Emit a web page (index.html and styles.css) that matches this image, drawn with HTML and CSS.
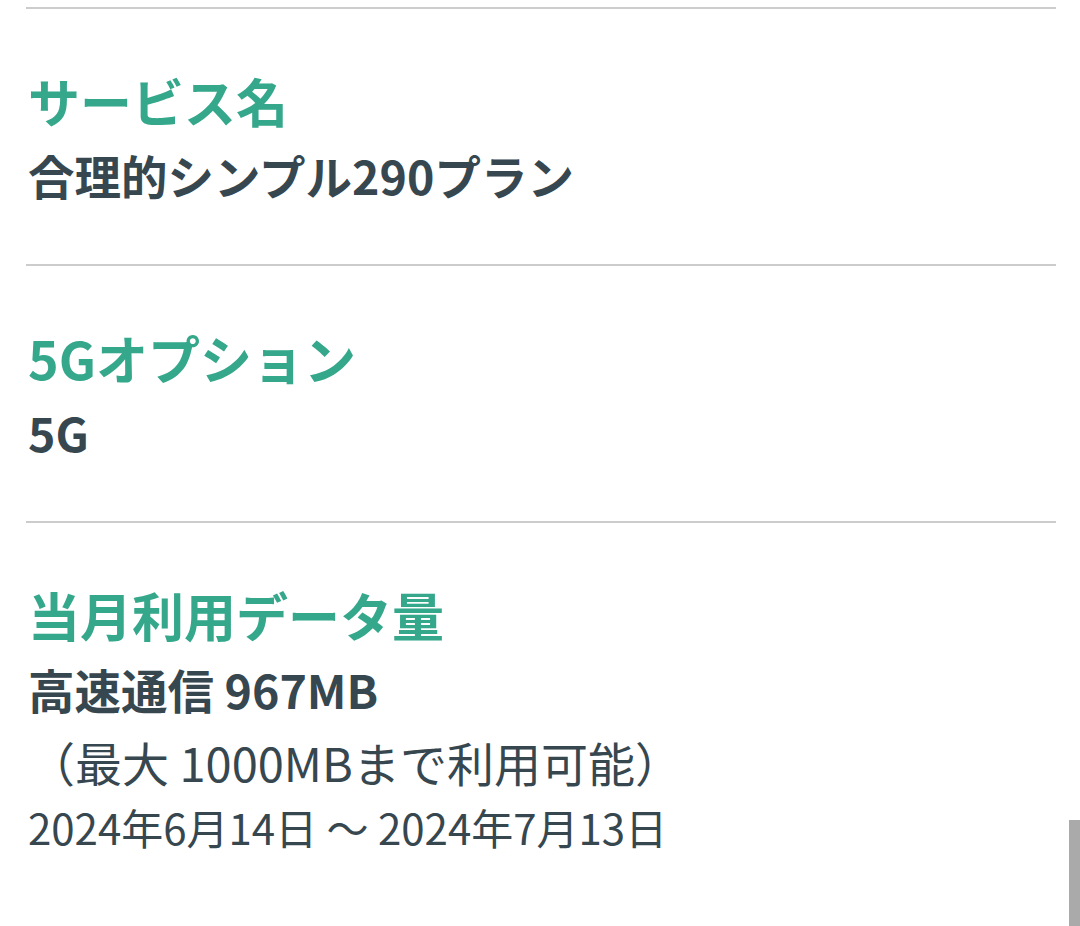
FILE: index.html
```html
<!DOCTYPE html>
<html lang="ja">
<head>
  <meta charset="UTF-8">
  <meta name="viewport" content="width=device-width, initial-scale=1.0">
  <title>ご契約内容</title>
  <link rel="stylesheet" href="styles.css">
</head>
<body>

  <div class="contract">
    <div class="item">
      <div class="item-label">サービス名</div>
      <div class="item-value">合理的シンプル290プラン</div>
    </div>

    <div class="item">
      <div class="item-label">5Gオプション</div>
      <div class="item-value">5G</div>
    </div>

    <div class="item">
      <div class="item-label">当月利用データ量</div>
      <div class="item-value">高速通信 967MB</div>
      <div class="item-note">（最大 1000MBまで利用可能）</div>
      <div class="item-period">2024年6月14日 〜 2024年7月13日</div>
    </div>
  </div>

  <div class="scroll-thumb"></div>

</body>
</html>
```

FILE: styles.css
```css
body {
  font-family: 'Noto Sans CJK JP', 'Noto Sans', sans-serif;
  background-color: #fff;
  color: #37474f;
  margin: 0;
  padding: 0;
  overflow: hidden;
  height: 926px;
}

.contract {
  margin: 0 24px 0 26px;
  padding-top: 7px;
}

.item {
  border-top: 2px solid #cccccc;
  padding: 54px 2px 53px;
}

.item-label {
  font-size: 52px;
  font-weight: 700;
  line-height: 75px;
  color: #35a78b;
}

.item-value {
  font-size: 46.5px;
  font-weight: 700;
  line-height: 73px;
}

.item-note {
  font-size: 47px;
  line-height: 73px;
}

.item-period {
  font-size: 42px;
  line-height: 58px;
}

.scroll-thumb {
  position: absolute;
  right: 0;
  top: 820px;
  width: 11px;
  height: 106px;
  background-color: #aaaaaa;
}
```
